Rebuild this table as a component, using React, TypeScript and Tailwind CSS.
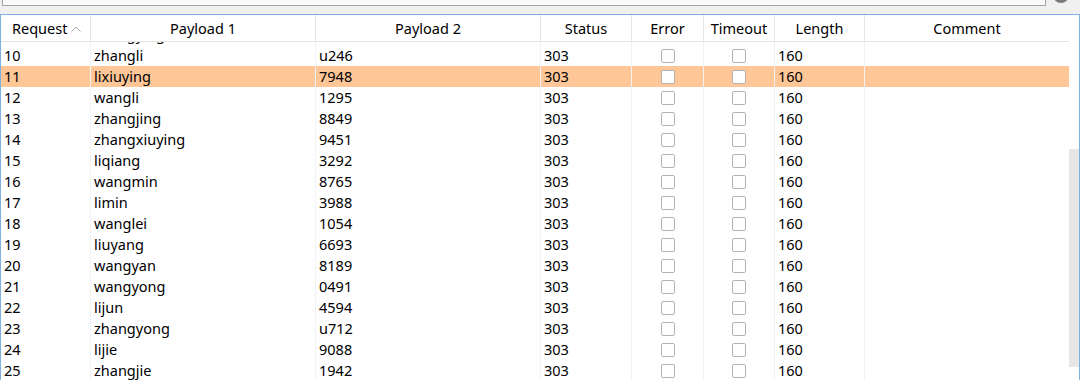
import React from "react";

const rows: [string, string, string][] = [
  ["9", "zhangying", "5532"],
  ["10", "zhangli", "u246"],
  ["11", "lixiuying", "7948"],
  ["12", "wangli", "1295"],
  ["13", "zhangjing", "8849"],
  ["14", "zhangxiuying", "9451"],
  ["15", "liqiang", "3292"],
  ["16", "wangmin", "8765"],
  ["17", "limin", "3988"],
  ["18", "wanglei", "1054"],
  ["19", "liuyang", "6693"],
  ["20", "wangyan", "8189"],
  ["21", "wangyong", "0491"],
  ["22", "lijun", "4594"],
  ["23", "zhangyong", "u712"],
  ["24", "lijie", "9088"],
  ["25", "zhangjie", "1942"],
];

function Check() {
  return <div className="w-[14px] h-[14px] rounded-[2px] border border-[#b3b3b3] bg-white" />;
}

const hc = "border-r border-[#e5e5e5] flex items-center justify-center";

export default function App() {
  return (
    <div
      className="w-[1080px] h-[380px] overflow-hidden bg-[#f0f0f0] text-black"
      style={{ fontFamily: '"Noto Sans", "Open Sans", sans-serif' }}
    >
      {/* top strip */}
      <div className="h-[14px] flex items-start pl-[2px]">
        <div className="w-[1044px] h-[6px] border-l border-r border-b border-[#a6a6a6] bg-[#fafafa]" />
        <div className="ml-[7px] mt-[-13px] w-[16px] h-[16px] rounded-full bg-[#7a7a7a]" />
      </div>

      {/* table panel */}
      <div className="h-[400px] border border-[#7fb0e0] bg-white flex">
        <div className="w-[1068px] flex flex-col">
          {/* header */}
          <div className="h-[27px] flex border-b border-[#e5e5e5] text-[14.5px] leading-[20px]">
            <div className="w-[90px] border-r border-[#e5e5e5] pl-[11px] flex items-center">
              <span>Request</span>
              <svg width="10" height="6" viewBox="0 0 10 6" className="ml-[4px] mt-[1px]">
                <path d="M0.5 5.5 L5 1 L9.5 5.5" fill="none" stroke="#a8a8a8" strokeWidth="1" />
              </svg>
            </div>
            <div className={`w-[225px] ${hc}`}>Payload 1</div>
            <div className={`w-[225px] ${hc}`}>Payload 2</div>
            <div className={`w-[91px] ${hc}`}>Status</div>
            <div className={`w-[72px] ${hc}`}>Error</div>
            <div className={`w-[71px] ${hc}`}>Timeout</div>
            <div className={`w-[90px] ${hc}`}>Length</div>
            <div className="flex-1 flex items-center justify-center">Comment</div>
          </div>
          {/* body */}
          <div className="flex-1 overflow-hidden">
            <div className="mt-[-18px] text-[14.5px]">
              {rows.map(([id, p1, p2]) => (
                <div
                  key={id}
                  className={`h-[21px] leading-[21px] flex ${id === "11" ? "bg-[#ffc697]" : ""}`}
                >
                  <div className="w-[90px] border-r border-[#f2f2f2] pl-[3px]">{id}</div>
                  <div className="w-[225px] border-r border-[#f2f2f2] pl-[3px]">{p1}</div>
                  <div className="w-[225px] border-r border-[#f2f2f2] pl-[3px]">{p2}</div>
                  <div className="w-[91px] border-r border-[#f2f2f2] pl-[3px]">303</div>
                  <div className="w-[72px] border-r border-[#f2f2f2] flex items-center justify-center pl-[1px]">
                    <Check />
                  </div>
                  <div className="w-[71px] border-r border-[#f2f2f2] flex items-center justify-center">
                    <Check />
                  </div>
                  <div className="w-[90px] border-r border-[#f2f2f2] pl-[3px]">160</div>
                  <div className="flex-1" />
                </div>
              ))}
            </div>
          </div>
        </div>
        {/* scrollbar */}
        <div className="w-[10px] pt-[134px]">
          <div className="h-[218px] bg-[#e6e6e6]" />
        </div>
      </div>
    </div>
  );
}
